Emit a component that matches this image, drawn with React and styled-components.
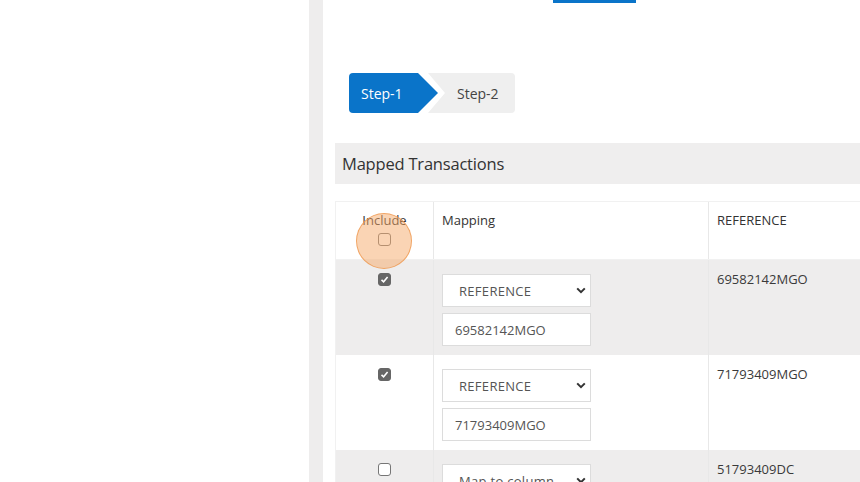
import React from "react";
import styled, { createGlobalStyle } from "styled-components";

const GlobalStyle = createGlobalStyle`
  html, body {
    margin: 0;
    padding: 0;
    height: 482px;
    overflow: hidden;
    background: #ffffff;
    font-family: "Open Sans", "Noto Sans", sans-serif;
  }
`;

const rows = [
  { checked: true, field: "REFERENCE", value: "69582142MGO", ref: "69582142MGO", shade: true },
  { checked: true, field: "REFERENCE", value: "71793409MGO", ref: "71793409MGO", shade: false },
  { checked: false, field: "Map to column", value: "", ref: "51793409DC", shade: true },
];

function Chevron() {
  return (
    <svg width="10" height="7" viewBox="0 0 10 7">
      <path d="M1.2 1.4 L5 5.2 L8.8 1.4" fill="none" stroke="#333" strokeWidth="2" />
    </svg>
  );
}

function Check({ checked }) {
  return (
    <Box $checked={checked}>
      {checked && (
        <svg width="9" height="9" viewBox="0 0 9 9">
          <path d="M1.5 4.8 L3.6 6.8 L7.6 2" fill="none" stroke="#fff" strokeWidth="1.6" />
        </svg>
      )}
    </Box>
  );
}

export default function App() {
  return (
    <>
      <GlobalStyle />
      <Page>
        <LeftPane />
        <Divider />
        <Main>
          <TabBar>
            <ActiveTab />
          </TabBar>
          <Steps>
            <StepOne>Step-1</StepOne>
            <StepTwo>Step-2</StepTwo>
          </Steps>
          <SectionHeader>Mapped Transactions</SectionHeader>
          <Table>
            <HeadRow>
              <IncludeCell>
                <HeadLabel>Include</HeadLabel>
                <Check checked={false} />
                <Cursor />
              </IncludeCell>
              <MapCell>
                <HeadLabel>Mapping</HeadLabel>
              </MapCell>
              <RefCell>
                <HeadLabel>REFERENCE</HeadLabel>
              </RefCell>
            </HeadRow>
            {rows.map((r, i) => (
              <Row key={i} $shade={r.shade}>
                <IncludeCell>
                  <Check checked={r.checked} />
                </IncludeCell>
                <MapCell>
                  <Select>
                    <span>{r.field}</span>
                    <Chevron />
                  </Select>
                  {r.value && <Input>{r.value}</Input>}
                </MapCell>
                <RefCell>
                  <RefText>{r.ref}</RefText>
                </RefCell>
              </Row>
            ))}
          </Table>
        </Main>
      </Page>
    </>
  );
}

const Page = styled.div`
  display: flex;
  height: 482px;
  overflow: hidden;
`;

const LeftPane = styled.div`
  width: 309px;
  flex-shrink: 0;
  background: #ffffff;
`;

const Divider = styled.div`
  width: 14px;
  flex-shrink: 0;
  background: #eeeded;
`;

const Main = styled.div`
  flex: 1;
  padding-left: 12px;
  overflow: hidden;
`;

const TabBar = styled.div`
  height: 3px;
  display: flex;
  padding-left: 218px;
`;

const ActiveTab = styled.div`
  width: 83px;
  background: #0a74c9;
`;

const Steps = styled.div`
  display: flex;
  margin: 70px 0 0 14px;
  height: 40px;
  font-size: 14px;
`;

const StepOne = styled.div`
  position: relative;
  z-index: 1;
  width: 77px;
  padding-left: 12px;
  display: flex;
  align-items: center;
  background: #0a74c9;
  color: #ffffff;
  border-radius: 4px 0 0 4px;
  clip-path: polygon(0 0, calc(100% - 20px) 0, 100% 50%, calc(100% - 20px) 100%, 0 100%);
`;

const StepTwo = styled.div`
  width: 58px;
  margin-left: -10px;
  padding-left: 29px;
  display: flex;
  align-items: center;
  background: #efefef;
  color: #444;
  border-radius: 0 4px 4px 0;
  clip-path: polygon(0 0, 100% 0, 100% 100%, 0 100%, 17px 50%);
`;

const SectionHeader = styled.div`
  margin-top: 30px;
  height: 41px;
  padding-left: 7px;
  display: flex;
  align-items: center;
  background: #efeeee;
  color: #333;
  font-size: 16.5px;
  letter-spacing: -0.2px;
`;

const Table = styled.div`
  margin-top: 17px;
  width: 560px;
  border-top: 1px solid #f1f1f1;
`;

const HeadRow = styled.div`
  display: grid;
  grid-template-columns: 98px 275px 1fr;
  height: 57px;
  border-bottom: 1px solid #f1f1f1;

  & > div {
    padding-top: 9px;
  }
`;

const Row = styled.div`
  display: grid;
  grid-template-columns: 98px 275px 1fr;
  height: 95px;
  background: ${(p) => (p.$shade ? "#eeeded" : "#ffffff")};
`;

const IncludeCell = styled.div`
  position: relative;
  display: flex;
  flex-direction: column;
  align-items: center;
  gap: 4px;
  padding-top: 13px;
  border-left: 1px solid #f1f1f1;
`;

const MapCell = styled.div`
  display: flex;
  flex-direction: column;
  gap: 6px;
  padding: 14px 0 0 8px;
  border-left: 1px solid #e8e8e8;
`;

const RefCell = styled.div`
  padding: 9px 0 0 8px;
  border-left: 1px solid #e8e8e8;
`;

const HeadLabel = styled.div`
  font-size: 13px;
  color: #333;
  line-height: 18px;
`;

const RefText = styled.div`
  font-size: 13px;
  color: #3a3a3a;
  line-height: 20px;
`;

const Box = styled.span`
  width: 13px;
  height: 13px;
  box-sizing: border-box;
  border-radius: 3px;
  display: flex;
  align-items: center;
  justify-content: center;
  background: ${(p) => (p.$checked ? "#666666" : "#ffffff")};
  border: 1px solid ${(p) => (p.$checked ? "#666666" : "#767676")};
`;

const Cursor = styled.div`
  position: absolute;
  left: 20px;
  top: 11px;
  width: 54px;
  height: 54px;
  border-radius: 50%;
  background: rgba(246, 170, 105, 0.5);
  border: 1px solid rgba(238, 150, 75, 0.75);
`;

const Select = styled.div`
  width: 149px;
  height: 33px;
  box-sizing: border-box;
  border: 1px solid #dcdcdc;
  background: #ffffff;
  display: flex;
  align-items: center;
  justify-content: space-between;
  padding: 0 4px 0 16px;
  font-size: 13px;
  letter-spacing: 0.3px;
  color: #555;
`;

const Input = styled.div`
  width: 149px;
  height: 33px;
  box-sizing: border-box;
  border: 1px solid #dcdcdc;
  background: #ffffff;
  display: flex;
  align-items: center;
  padding-left: 12px;
  font-size: 13px;
  color: #555;
`;
